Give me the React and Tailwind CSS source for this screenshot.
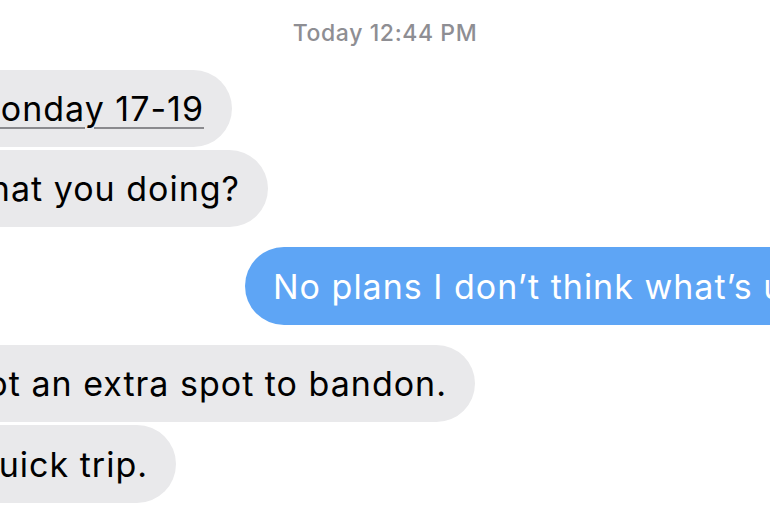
export default function App() {
  const font = { fontFamily: 'Inter, "Noto Sans", sans-serif' };
  return (
    <div className="w-[770px] h-[515px] bg-white overflow-hidden relative" style={font}>
      <div className="flex flex-col">
        <div className="pt-[19px] h-[70px] text-center text-[23px] leading-[28px] tracking-[0.6px] font-medium text-[#8e8e93]">
          Today 12:44 PM
        </div>
        <div className="w-[232px] flex justify-end">
          <div className="shrink-0 h-[77px] rounded-full bg-[#e9e9eb] pl-[28px] pr-[28px] flex items-center whitespace-nowrap text-[34px] tracking-[1px] text-black">
            <span className="underline decoration-[#8a8a8e] decoration-[1.5px] underline-offset-[6px]">Monday 17-19</span>
          </div>
        </div>
        <div className="w-[268px] flex justify-end mt-[3px]">
          <div className="shrink-0 h-[77px] rounded-full bg-[#e9e9eb] pl-[28px] pr-[28px] flex items-center whitespace-nowrap text-[34px] tracking-[1px] text-black">
            What you doing?
          </div>
        </div>
        <div className="mt-[20px] ml-[245px]">
          <div className="inline-flex shrink-0 h-[78px] rounded-full bg-[#5ea5f5] pl-[28px] pr-[28px] items-center whitespace-nowrap text-[34px] tracking-[1px] text-white">
            No plans I don’t think what’s up?
          </div>
        </div>
        <div className="w-[475px] flex justify-end mt-[20px]">
          <div className="shrink-0 h-[77px] rounded-full bg-[#e9e9eb] pl-[28px] pr-[28px] flex items-center whitespace-nowrap text-[34px] tracking-[1px] text-black">
            Got an extra spot to bandon.
          </div>
        </div>
        <div className="w-[176px] flex justify-end mt-[3px]">
          <div className="shrink-0 h-[78px] rounded-full bg-[#e9e9eb] pl-[28px] pr-[28px] flex items-center whitespace-nowrap text-[34px] tracking-[1px] text-black">
            Quick trip.
          </div>
        </div>
      </div>
    </div>
  );
}
